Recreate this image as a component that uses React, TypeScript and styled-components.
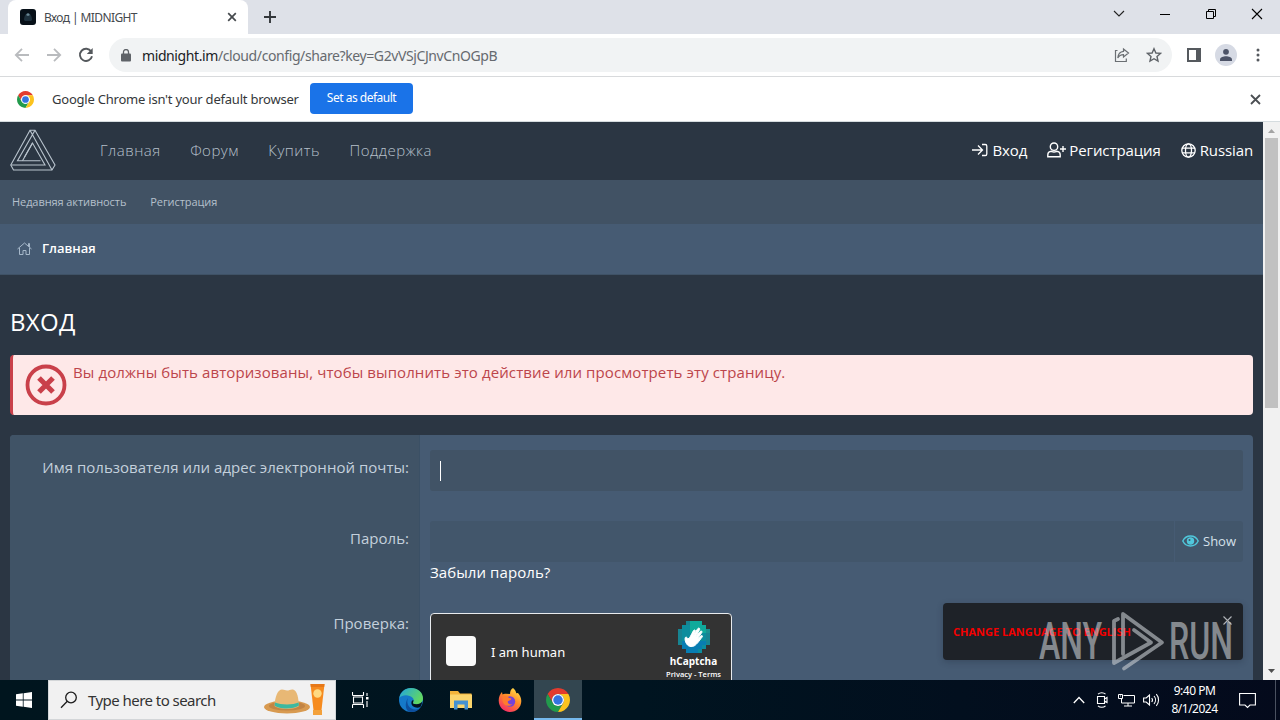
import React from 'react';
import styled, { createGlobalStyle } from 'styled-components';

const GlobalStyle = createGlobalStyle`
  * {
    box-sizing: border-box;
  }

  body {
    margin: 0;
    overflow: hidden;
    font-family: 'Open Sans', 'Noto Sans', sans-serif;
  }

  svg {
    display: block;
    flex: none;
  }
`;

const ChromeLogo = ({ size }: { size: number }) => (
  <svg width={size} height={size} viewBox="0 0 48 48">
    <path d="M24 12H44.78A24 24 0 0 0 3.22 12L13.6 30A12 12 0 0 1 24 12z" fill="#e33b2e" />
    <path d="M3.22 12A24 24 0 0 0 24 48L34.4 30A12 12 0 0 1 13.6 30z" fill="#229a4c" />
    <path d="M24 48A24 24 0 0 0 44.78 12H24A12 12 0 0 1 34.4 30z" fill="#fcc31e" />
    <circle cx="24" cy="24" r="12" fill="#fff" />
    <circle cx="24" cy="24" r="9.5" fill="#3474e0" />
  </svg>
);

const BrowserChrome = () => (
  <>
    <TabStrip>
      <Tab>
        <svg width="16" height="16" viewBox="0 0 16 16">
          <rect width="16" height="16" rx="3" fill="#071018" />
          <path d="M4 11c0-4 2-7 4-7s4 3 4 7l-1 1H5z" fill="#1d303c" />
          <path d="M6 6l2-2 2 2-2 1z" fill="#6b8795" />
        </svg>
        <TabTitle>Вход | MIDNIGHT</TabTitle>
        <svg width="10" height="10" viewBox="0 0 10 10" stroke="#45494d" strokeWidth="1.7">
          <path d="M1.2 1.2l7.6 7.6M8.8 1.2L1.2 8.8" />
        </svg>
      </Tab>
      <NewTab>
        <svg width="12" height="12" viewBox="0 0 12 12" stroke="#33373b" strokeWidth="1.9">
          <path d="M6 0v12M0 6h12" />
        </svg>
      </NewTab>
      <WindowButtons>
        <svg width="12" height="12" viewBox="0 0 12 12" fill="none" stroke="#222" strokeWidth="1.1">
          <path d="M1 3l5 5 5-5" />
        </svg>
        <svg width="12" height="12" viewBox="0 0 12 12" stroke="#000">
          <path d="M1 6.5h10" />
        </svg>
        <svg width="12" height="12" viewBox="0 0 12 12" fill="none" stroke="#000">
          <path d="M1.5 3.5h7v7h-7zM3.5 3.5v-2h7v7h-2" />
        </svg>
        <svg width="12" height="12" viewBox="0 0 12 12" stroke="#000" strokeWidth="1.1">
          <path d="M1 1l10 10M11 1L1 11" />
        </svg>
      </WindowButtons>
    </TabStrip>
    <Toolbar>
      <NavIcons>
        <svg width="16" height="16" viewBox="0 0 16 16" fill="none" stroke="#b9bbbe" strokeWidth="1.8">
          <path d="M15 8H2M8 1.8L1.8 8 8 14.2" />
        </svg>
        <svg width="16" height="16" viewBox="0 0 16 16" fill="none" stroke="#b9bbbe" strokeWidth="1.8">
          <path d="M1 8h13M8 1.8L14.2 8 8 14.2" />
        </svg>
        <svg width="16" height="16" viewBox="0 0 16 16" fill="none" stroke="#54585c" strokeWidth="1.9">
          <path d="M13.2 4.6A6.1 6.1 0 1 0 14 9.3" />
          <path d="M14.7 1v6H8.8z" fill="#54585c" stroke="none" />
        </svg>
      </NavIcons>
      <AddressBar>
        <svg width="10" height="13" viewBox="0 0 10 13">
          <rect y="4.5" width="10" height="8" rx="1" fill="#5f6368" />
          <path d="M2.5 5V3a2.5 2.5 0 0 1 5 0v2" fill="none" stroke="#5f6368" strokeWidth="1.3" />
        </svg>
        <Url>
          <b>midnight.im</b>
          <span>/cloud/config/share?key=G2vVSjCJnvCnOGpB</span>
        </Url>
        <svg width="16" height="16" viewBox="0 0 16 16" fill="none" stroke="#6b6f73" strokeWidth="1.2">
          <path d="M3.5 3.5H1.5v11h10.800v-3" />
          <path d="M9.5 2l5 4-5 4V7.700C6.500 7.700 5 8.800 3.800 11c.3-3.800 2.200-6.200 5.700-6.600z" />
        </svg>
        <svg width="16" height="16" viewBox="0 0 16 16" fill="none" stroke="#5f6368" strokeWidth="1.4">
          <path d="M8 1.700l1.900 4.300 4.600.4-3.500 3.100 1 4.600-4-2.400-4 2.400 1-4.600L1.500 6.400l4.600-.4z" />
        </svg>
      </AddressBar>
      <ToolbarIcons>
        <svg width="14" height="14" viewBox="0 0 14 14">
          <path d="M0 0h14v14H0zM2 2v10h7V2z" fill="#55595e" fillRule="evenodd" />
        </svg>
        <svg width="22" height="22" viewBox="0 0 22 22">
          <circle cx="11" cy="11" r="11" fill="#d6dae4" />
          <circle cx="11" cy="7.8" r="2.9" fill="#4c5367" />
          <path d="M5 17v-1.500c0-2.200 3.500-3.200 6-3.200s6 1 6 3.200V17z" fill="#4c5367" />
        </svg>
        <svg width="4" height="14" viewBox="0 0 4 14" fill="#55595e">
          <circle cx="2" cy="2" r="1.5" />
          <circle cx="2" cy="7" r="1.5" />
          <circle cx="2" cy="12" r="1.5" />
        </svg>
      </ToolbarIcons>
    </Toolbar>
    <InfoBar>
      <ChromeLogo size={17} />
      <InfoText>Google Chrome isn't your default browser</InfoText>
      <DefaultButton>Set as default</DefaultButton>
      <svg width="11" height="11" viewBox="0 0 11 11" stroke="#4b4f53" strokeWidth="1.8">
        <path d="M1 1l9 9M10 1l-9 9" />
      </svg>
    </InfoBar>
  </>
);

const SiteHeader = () => (
  <>
    <Header>
      <svg width="46" height="42" viewBox="0 0 46 42" fill="none" stroke="#b9c4ce" strokeWidth="1.1">
        <path d="M20 1.200h5L45 36l-3 5H3.500L.8 36z" />
        <path d="M.8 36H35L22.500 14 14.500 28" />
        <path d="M20 1.200L42 41M25 1.200L7.500 31.700H30.500" />
        <path d="M22.500 14L12.500 31.700" />
      </svg>
      <MainNav>
        <span>Главная</span>
        <span>Форум</span>
        <span>Купить</span>
        <span>Поддержка</span>
      </MainNav>
      <UserNav>
        <UserLink $gap={4}>
          <svg width="16" height="14" viewBox="0 0 16 14" fill="none" stroke="#fff" strokeWidth="1.3">
            <path d="M0 7h10M6 2.500L10.500 7 6 11.500M10 1.500h3.200c1 0 1.600.6 1.600 1.600v7.800c0 1-.6 1.600-1.600 1.600H10" />
          </svg>
          Вход
        </UserLink>
        <UserLink $gap={3}>
          <svg width="19" height="16" viewBox="0 0 19 16" fill="none" stroke="#fff" strokeWidth="1.4">
            <circle cx="7" cy="4.7" r="3.7" />
            <path d="M4.500 9.300C2 9.500.8 11 .8 13v1.700h12.400V13c0-2-1.200-3.500-3.700-3.700-1.600.8-3.400.8-5 0zM13 7h6M16 4v6" />
          </svg>
          Регистрация
        </UserLink>
        <UserLink $gap={4}>
          <svg width="15" height="15" viewBox="0 0 15 15" fill="none" stroke="#fff" strokeWidth="1.3">
            <circle cx="7.5" cy="7.5" r="6.7" />
            <ellipse cx="7.5" cy="7.5" rx="3" ry="6.7" />
            <path d="M1 5.200h13M1 9.800h13" />
          </svg>
          Russian
        </UserLink>
      </UserNav>
    </Header>
    <SubNav>
      <span>Недавняя активность</span>
      <span>Регистрация</span>
    </SubNav>
    <Breadcrumb>
      <svg width="15" height="13" viewBox="0 0 15 13" fill="none" stroke="#a6b8ca">
        <path d="M.5 7l7-6 7 6M2.500 6v6.500h3.500V8.500h3v4h3.500V6M11.500 4V1.500h1V5" />
      </svg>
      Главная
    </Breadcrumb>
  </>
);

const HCaptcha = () => (
  <CaptchaBox>
    <CaptchaCheck />
    <CaptchaLabel>I am human</CaptchaLabel>
    <CaptchaBrand>
      <svg width="32" height="32" viewBox="0 0 32 32">
        <path d="M8 0h16v4h4v4h4v16h-4v4h-4v4H8v-4H4v-4H0V8h4V4h4z" fill="#0c8d9d" />
        <path d="M12 0h12v4h4v4h4v4H12z" fill="#10aa9b" />
        <path d="M4 20h24v4h-4v4h-4v4H8v-4H4z" fill="#087db2" />
        <path d="M0 8h4v16H0zM28 8h4v16h-4zM8 0h4v4H8z" fill="#1f7f8a" opacity=".6" />
        <path
          d="M9.500 24c-2-2-3-6-2.200-7.500.8-.8 1.800-.2 2.700 1.300l1.500-.8 4-7.500c1-1.200 2.300-.4 1.800.8L15 15l4.700-7.300c1-1.300 2.600-.3 1.900 1L17.400 16l4.900-5.600c1-1 2.300 0 1.500 1.200L19.200 18l3.800-3.200c1-.8 2 .2 1.200 1.200C21 20 18 25 14.500 25.500c-2 .3-3.800-.3-5-1.500z"
          fill="#fff"
          stroke="#fff"
        />
      </svg>
      <strong>hCaptcha</strong>
      <small>Privacy - Terms</small>
    </CaptchaBrand>
  </CaptchaBox>
);

const LoginForm = () => (
  <Form>
    <FormRow $height={71}>
      <FormLabel>Имя пользователя или адрес электронной почты:</FormLabel>
      <FormField>
        <TextInput>
          <Caret />
        </TextInput>
      </FormField>
    </FormRow>
    <FormRow $height={85}>
      <FormLabel>Пароль:</FormLabel>
      <FormField>
        <PasswordInput>
          <ShowButton>
            <svg width="17" height="12" viewBox="0 0 17 12" fill="none" stroke="#50c8dc" strokeWidth="1.4">
              <path d="M.8 6C4-.6 13-.6 16.200 6 13 12.600 4 12.600.8 6z" />
              <circle cx="8.5" cy="6" r="3" fill="#50c8dc" />
              <circle cx="7.5" cy="5" r="1" fill="#415469" stroke="none" />
            </svg>
            Show
          </ShowButton>
        </PasswordInput>
        <ForgotLink>Забыли пароль?</ForgotLink>
      </FormField>
    </FormRow>
    <FormRow $height={120}>
      <FormLabel>Проверка:</FormLabel>
      <FormField>
        <HCaptcha />
      </FormField>
    </FormRow>
  </Form>
);

const Watermark = () => (
  <WatermarkBlock>
    <svg width="220" height="70" viewBox="0 0 220 70">
      <g fill="#c9ced3" fontFamily="Roboto, sans-serif" fontSize="52" fontWeight="500">
        <text x="3" y="52" textLength="63" lengthAdjust="spacingAndGlyphs">
          ANY
        </text>
        <text x="133" y="52" textLength="64" lengthAdjust="spacingAndGlyphs">
          RUN
        </text>
      </g>
      <g fill="none" stroke="#c9ced3" strokeWidth="3.8" strokeLinejoin="round" strokeLinecap="round">
        <path d="M87 47V7l39 28.500L88 61.500" />
        <path d="M82 12l-4 2v42l37-20.500L98 23" />
      </g>
    </svg>
  </WatermarkBlock>
);

const Taskbar = () => (
  <TaskbarBlock>
    <StartButton>
      <svg width="16" height="16" viewBox="0 0 16 16" fill="#fff">
        <path d="M0 2.300L6.800 1.300v6.200H0zM7.600 1.200L16 0v7.500H7.600zM0 8.400h6.800v6.300L0 13.700zM7.600 8.400H16V16l-8.400-1.200z" />
      </svg>
    </StartButton>
    <SearchBox>
      <svg width="18" height="18" viewBox="0 0 18 18" fill="none" stroke="#1c1c1c" strokeWidth="1.3">
        <circle cx="11" cy="6.5" r="5.3" />
        <path d="M7.300 10.300L1 16.800" />
      </svg>
      <span>Type here to search</span>
      <svg width="62" height="34" viewBox="0 0 62 34">
        <ellipse cx="23" cy="24" rx="23" ry="6.500" fill="#d89a50" />
        <ellipse cx="23" cy="23" rx="18" ry="4.500" fill="#c28444" />
        <path d="M10.500 23C11 13 14 6.500 18 6.500c2.500 0 3 1 5 1s4-1.500 6-1c4.500 1 5.500 9 6 16.500-4 4-20 4-24.500 0z" fill="#e8b875" />
        <path d="M11 19.500c6 2.500 18 2.500 23.500 0l.5 3c-5 4-20 4-24.500 0z" fill="#3cb8a0" />
        <path d="M46.500 1h14l-3 26h-8z" fill="#f68b1f" />
        <path d="M46.500 1h14l-.3 3H46.800z" fill="#e77817" />
        <path d="M49 27h9v5h-9z" fill="#f3a13b" />
        <circle cx="53.500" cy="10.500" r="4.200" fill="#ffda82" />
      </svg>
    </SearchBox>
    <TaskItem $width={49}>
      <svg width="17" height="16" viewBox="0 0 17 16" fill="none" stroke="#fff" strokeWidth="1.1">
        <path d="M.5 3.500h11M.5 12.500h11M.5 0v3.500M11.500 0v3.500M.5 12.500V16M11.500 12.500V16M1.500 5h9v6h-9zM15 1v3M15 9v6" />
        <path d="M14 5h2.500v2.500H14z" fill="#fff" stroke="none" />
      </svg>
    </TaskItem>
    <TaskItem $width={51}>
      <svg width="24" height="24" viewBox="0 0 24 24">
        <defs>
          <linearGradient id="edgeTop" x1="0" y1="0" x2="1" y2=".5">
            <stop offset="0" stopColor="#21a5e0" />
            <stop offset="1" stopColor="#62d861" />
          </linearGradient>
        </defs>
        <circle cx="12" cy="12" r="12" fill="#1579c9" />
        <path d="M.3 10C1.500 4 6 0 12 0c7 0 12 4.600 12 10.300 0 4-3 6-6.500 6-3 0-4.300-1-3.300-2.300.7-1 .8-2.700-.4-4C10.500 6.300 3 6.500.3 10z" fill="url(#edgeTop)" />
        <path d="M9 10c-2.500 6 2 12 8 11.500 2-.1 3.500-.8 4.600-2-2.300 3-5.600 4.500-9.300 4.500C6.500 24 5 16 9 10z" fill="#0d4f9e" />
        <path d="M14.200 14c-1 1.300.3 2.300 3.300 2.300 2.400 0 4.600-.9 5.700-2.700-.3 2.400-.8 3.900-1.800 5.400-4 2-9.500-.5-9-4.500.1-1.500 1-2.500 2-2.500z" fill="#04131f" />
      </svg>
    </TaskItem>
    <TaskItem $width={49}>
      <svg width="22" height="20" viewBox="0 0 22 20">
        <path d="M0 1h8l2 2.500h11.500V18H0z" fill="#f3b43a" />
        <path d="M0 4.500h22V18H0z" fill="#fbd56c" />
        <path d="M4 19.500V10.500h14v9h-3.500V14.500h-7v5z" fill="#4592d2" />
      </svg>
    </TaskItem>
    <TaskItem $width={49}>
      <svg width="24" height="24" viewBox="0 0 24 24">
        <defs>
          <linearGradient id="fox" x1=".8" y1="0" x2=".2" y2="1">
            <stop offset="0" stopColor="#ffe24a" />
            <stop offset=".45" stopColor="#ff8a28" />
            <stop offset="1" stopColor="#f5246c" />
          </linearGradient>
        </defs>
        <path d="M15 0c2 1.500 3 3.500 3.300 5.300L20 5c2 2 3.300 5 3.300 8 0 6.400-5 11-11.300 11S.7 19 .7 12.500C.7 9 2 6 4 4l.5 2.500c1-.8 2-1 3.500-.8L12 6c0-3 1-5 3-6z" fill="url(#fox)" />
        <circle cx="12" cy="13.500" r="5.200" fill="#7442d9" />
        <path d="M4.500 9c3-2 5-1 6.500 1l2.500.5c-.5 1.500-2 2-3.500 2.500-1 3 2 4 4.500 3-4 4-10 1-10-4z" fill="#ff7b2e" />
      </svg>
    </TaskItem>
    <TaskItem $width={48} $active>
      <ChromeLogo size={24} />
    </TaskItem>
    <Tray>
      <svg width="12" height="8" viewBox="0 0 12 8" fill="none" stroke="#fff" strokeWidth="1.3">
        <path d="M.8 7L6 1.500 11.200 7" />
      </svg>
      <svg width="13" height="16" viewBox="0 0 13 16" fill="none" stroke="#fff" strokeWidth="1.1">
        <path d="M1.500 4.500h7v7h-7zM8.500 7l2.500-1.500v5L8.500 9M2 2.200C4 .3 7.500.3 9.500 2.200M2 13.800c2 1.900 5.500 1.900 7.500 0" />
      </svg>
      <svg width="17" height="14" viewBox="0 0 17 14" fill="none" stroke="#fff">
        <path d="M5.500 2.500h11v7.500H3.500V6M.5 1.500h4v4h-4zM10 10v3M6 13h8M2 3h1" />
      </svg>
      <svg width="17" height="14" viewBox="0 0 17 14" fill="none" stroke="#fff" strokeWidth="1.1">
        <path d="M.6 5v4h2.600L6.500 12V2L3.200 5zM8.700 5c1 1.200 1 2.800 0 4M11 3c2 2.300 2 5.700 0 8M13.300 1.200c3 3.400 3 8.200 0 11.600" />
      </svg>
    </Tray>
    <Clock>
      <span>9:40 PM</span>
      <span>8/1/2024</span>
    </Clock>
    <svg width="17" height="17" viewBox="0 0 17 17" fill="none" stroke="#fff" strokeWidth="1.1">
      <path d="M.6 1.500h15.800v11.500H11L8.500 15.500 6 13H.6z" />
    </svg>
    <ShowDesktop />
  </TaskbarBlock>
);

const App = () => {
  return (
    <Screen>
      <GlobalStyle />
      <BrowserChrome />
      <Viewport>
        <Page>
          <SiteHeader />
          <Content>
            <Title>ВХОД</Title>
            <Alert>
              <svg width="42" height="42" viewBox="0 0 42 42" fill="none" stroke="#c9404a">
                <circle cx="21" cy="21" r="18.5" strokeWidth="3.8" />
                <path d="M14 14l14 14M28 14L14 28" strokeWidth="5.2" />
              </svg>
              <p>Вы должны быть авторизованы, чтобы выполнить это действие или просмотреть эту страницу.</p>
            </Alert>
            <LoginForm />
          </Content>
          <LanguageNotice>
            <span>CHANGE LANGUAGE TO ENGLISH</span>
            <svg width="9" height="9" viewBox="0 0 9 9" stroke="#b0b4b8" strokeWidth="1.1">
              <path d="M.5.5l8 8M8.500.5l-8 8" />
            </svg>
          </LanguageNotice>
          <Watermark />
        </Page>
        <Scrollbar>
          <svg width="7" height="4" viewBox="0 0 7 4">
            <path d="M0 4l3.500-4L7 4z" fill="#a3a3a3" />
          </svg>
          <ScrollThumb />
          <svg width="7" height="4" viewBox="0 0 7 4">
            <path d="M0 0l3.500 4L7 0z" fill="#505050" />
          </svg>
        </Scrollbar>
      </Viewport>
      <Taskbar />
    </Screen>
  );
};

const Screen = styled.div`
  width: 1280px;
  height: 720px;
  display: flex;
  flex-direction: column;
  overflow: hidden;
  white-space: nowrap;
`;

const TabStrip = styled.div`
  height: 34px;
  flex: none;
  display: flex;
  align-items: center;
  padding-left: 8px;
  background: #dee1e8;
`;

const Tab = styled.div`
  width: 240px;
  height: 34px;
  display: flex;
  align-items: center;
  padding: 0 11px 0 12px;
  border-radius: 8px 8px 0 0;
  background: #fff;
`;

const TabTitle = styled.span`
  flex: 1;
  padding-left: 8px;
  font: 12px 'Noto Sans', sans-serif;
  letter-spacing: -0.6px;
  color: #45494d;
`;

const NewTab = styled.div`
  flex: 1;
  padding-left: 16px;
`;

const WindowButtons = styled.div`
  display: flex;
  gap: 34px;
  padding: 0 17px 6px 0;
`;

const Toolbar = styled.div`
  height: 43px;
  flex: none;
  display: flex;
  align-items: center;
  padding: 0 19px 0 14px;
  background: #fff;
  border-bottom: 1px solid #d8dadc;
`;

const NavIcons = styled.div`
  display: flex;
  gap: 16px;
  width: 95px;
`;

const AddressBar = styled.div`
  width: 1063px;
  height: 34px;
  display: flex;
  align-items: center;
  padding: 0 10px 0 12px;
  border-radius: 17px;
  background: #f1f3f4;

  svg + svg {
    margin-left: 16px;
  }
`;

const Url = styled.div`
  flex: 1;
  padding-left: 11px;
  font: 14px 'Noto Sans', sans-serif;
  letter-spacing: -0.4px;
  color: #666a6f;

  b {
    font-weight: 400;
    color: #202124;
  }
`;

const ToolbarIcons = styled.div`
  flex: 1;
  display: flex;
  align-items: center;
  padding-left: 15px;

  svg:nth-child(2) {
    margin: 0 19px 0 14px;
  }
`;

const InfoBar = styled.div`
  height: 45px;
  flex: none;
  display: flex;
  align-items: center;
  padding: 0 19px 0 17px;
  background: #fff;
  border-bottom: 1px solid #d5dcdf;

  > svg:last-child {
    margin-left: auto;
  }
`;

const InfoText = styled.span`
  padding-left: 18px;
  width: 276px;
  font: 13px 'Noto Sans', sans-serif;
  letter-spacing: -0.22px;
  color: #34373a;
`;

const DefaultButton = styled.button`
  width: 103px;
  height: 31px;
  margin-bottom: 2px;
  padding: 0 0 1px;
  border: 0;
  border-radius: 4px;
  background: #1a73e8;
  color: #fff;
  font: 12px 'Noto Sans', sans-serif;
  letter-spacing: -0.5px;
`;

const Viewport = styled.div`
  height: 558px;
  flex: none;
  display: flex;
`;

const Page = styled.main`
  position: relative;
  width: 1263px;
  height: 558px;
  overflow: hidden;
  background: #2b3643;
`;

const Header = styled.header`
  height: 58px;
  display: flex;
  align-items: center;
  padding: 0 10px 2px;
  font-size: 15px;
`;

const MainNav = styled.nav`
  flex: 1;
  display: flex;
  gap: 29.5px;
  padding-left: 44px;
  color: #b6c0cb;
  font-weight: 300;
  letter-spacing: 0.5px;
`;

const UserNav = styled.div`
  display: flex;
  gap: 20px;
  color: #fff;
  letter-spacing: -0.1px;
`;

const UserLink = styled.a<{ $gap: number }>`
  display: flex;
  align-items: center;
  gap: ${({ $gap }) => $gap}px;
`;

const SubNav = styled.nav`
  height: 44px;
  display: flex;
  align-items: center;
  gap: 24px;
  padding: 0 0 2px 12px;
  background: #415264;
  color: #b5c0cc;
  font-size: 11px;
  letter-spacing: -0.08px;
`;

const Breadcrumb = styled.div`
  height: 51px;
  display: flex;
  align-items: center;
  gap: 10px;
  padding: 0 0 2px 17px;
  background: #465b73;
  border-bottom: 1px solid #3f5266;
  color: #fff;
  font-size: 13px;
  font-weight: 600;
`;

const Content = styled.div`
  padding: 30px 10px 0;
`;

const Title = styled.h1`
  margin: 0 0 16px;
  color: #fff;
  font-size: 24px;
  font-weight: 500;
  line-height: 34px;
  letter-spacing: 0.3px;
`;

const Alert = styled.div`
  height: 60px;
  display: flex;
  gap: 6px;
  padding: 9px 12px;
  border-left: 3px solid #c9404a;
  border-radius: 4px;
  background: #fee8e8;
  color: #bc454b;
  font-size: 15px;
  letter-spacing: 0.1px;

  p {
    margin: -2px 0 0;
  }
`;

const Form = styled.form`
  margin-top: 20px;
  border-radius: 4px 4px 0 0;
  overflow: hidden;
  background: #465b73;
`;

const FormRow = styled.div<{ $height: number }>`
  display: flex;
  height: ${({ $height }) => $height}px;
`;

const FormLabel = styled.label`
  width: 410px;
  padding: 22px 10px 0 0;
  border-right: 1px solid #3b5065;
  background: #405366;
  color: #c4d0dc;
  font-size: 15px;
  letter-spacing: 0.02px;
  text-align: right;
`;

const FormField = styled.div`
  flex: 1;
  padding: 15px 10px 0;
`;

const TextInput = styled.div`
  height: 41px;
  display: flex;
  align-items: center;
  padding-left: 10px;
  border-radius: 3px;
  background: #415366;
`;

const Caret = styled.i`
  width: 1px;
  height: 20px;
  background: #fff;
`;

const PasswordInput = styled.div`
  height: 41px;
  display: flex;
  justify-content: flex-end;
  border-radius: 3px;
  background: #42566b;
`;

const ShowButton = styled.div`
  width: 69px;
  display: flex;
  align-items: center;
  gap: 4px;
  padding: 0 0 2px 7px;
  border-left: 1px solid #465b73;
  color: #d5e0ea;
  font-size: 13px;
`;

const ForgotLink = styled.a`
  display: block;
  color: #fff;
  font-size: 15px;
  line-height: 21px;
  letter-spacing: 0.08px;
`;

const CaptchaBox = styled.div`
  width: 302px;
  height: 76px;
  display: flex;
  align-items: center;
  margin-top: 7px;
  padding-left: 15px;
  border: 1px solid #e8ebee;
  border-radius: 4px;
  background: #333;
`;

const CaptchaCheck = styled.div`
  width: 30px;
  height: 30px;
  border-radius: 4px;
  background: #fafafa;
`;

const CaptchaLabel = styled.span`
  flex: 1;
  padding: 2px 0 0 15px;
  color: #fff;
  font: 13px 'Noto Sans', sans-serif;
`;

const CaptchaBrand = styled.div`
  width: 75px;
  height: 100%;
  display: flex;
  flex-direction: column;
  align-items: center;
  padding-top: 7px;
  color: #fff;
  font-size: 10px;
  line-height: 13px;

  strong {
    margin-top: 2px;
  }

  small {
    font-size: 7.5px;
    font-weight: 600;
    line-height: 12px;
  }
`;

const LanguageNotice = styled.div`
  position: absolute;
  left: 943px;
  top: 481px;
  width: 300px;
  height: 57px;
  display: flex;
  align-items: center;
  justify-content: space-between;
  padding: 0 11px 0 10px;
  border-radius: 4px;
  background: #1e2228;
  box-shadow: 0 2px 6px rgba(30, 40, 55, 0.3);
  color: #f40000;
  font-size: 11px;
  font-weight: 700;

  svg {
    align-self: flex-start;
    margin-top: 13px;
  }
`;

const WatermarkBlock = styled.div`
  position: absolute;
  left: 1036px;
  top: 485px;
  opacity: 0.6;
`;

const Scrollbar = styled.div`
  width: 17px;
  display: flex;
  flex-direction: column;
  align-items: center;
  padding: 7px 0 7px;
  background: #f1f1f1;

  svg:last-child {
    margin-top: auto;
  }
`;

const ScrollThumb = styled.div`
  width: 13px;
  height: 270px;
  margin-top: 5px;
  background: #c1c1c1;
`;

const TaskbarBlock = styled.footer`
  height: 40px;
  flex: none;
  display: flex;
  align-items: center;
  background: linear-gradient(90deg, #00151e 0%, #001420 50%, #040a1c 100%);
`;

const StartButton = styled.div`
  width: 48px;
  display: flex;
  justify-content: center;
`;

const SearchBox = styled.div`
  width: 288px;
  height: 40px;
  display: flex;
  align-items: center;
  gap: 10px;
  padding: 0 9px 0 11px;
  border: 1px solid #d3d6d8;
  background: #f1f1f1;
  color: #333;
  font: 15px 'Noto Sans', sans-serif;
  letter-spacing: -0.55px;

  svg:last-child {
    margin-left: auto;
  }
`;

const TaskItem = styled.div<{ $width: number; $active?: boolean }>`
  width: ${({ $width }) => $width}px;
  height: 40px;
  display: flex;
  align-items: center;
  justify-content: center;
  background: ${({ $active }) => ($active ? '#334650' : 'transparent')};
  box-shadow: ${({ $active }) => ($active ? 'inset 0 -2px #76b9ed' : 'none')};
`;

const Tray = styled.div`
  flex: 1;
  display: flex;
  align-items: center;
  justify-content: flex-end;
  gap: 8.5px;

  svg:first-child {
    margin-right: 3px;
  }
`;

const Clock = styled.div`
  width: 67px;
  margin: 0 11px 0 1px;
  display: flex;
  flex-direction: column;
  text-align: center;
  color: #fff;
  font: 12px/18px 'Noto Sans', sans-serif;
  letter-spacing: -0.5px;
`;

const ShowDesktop = styled.div`
  width: 5px;
  height: 40px;
  margin-left: 19px;
  border-left: 1px solid #4a5160;
`;

export default App;
